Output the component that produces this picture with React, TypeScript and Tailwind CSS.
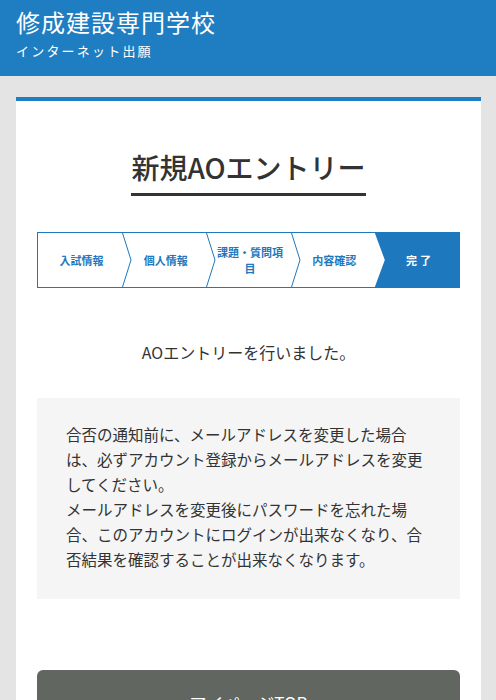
// Entry complete page — ＡＯエントリー完了

const steps = [
  { label: ['入試情報'] },
  { label: ['個人情報'] },
  { label: ['課題・質問項', '目'] },
  { label: ['内容確認'] },
  { label: ['完了'], active: true },
];

const noticeLines = [
  '合否の通知前に、メールアドレスを変更した場合',
  'は、必ずアカウント登録からメールアドレスを変更',
  'してください。',
  'メールアドレスを変更後にパスワードを忘れた場',
  '合、このアカウントにログインが出来なくなり、合',
  '否結果を確認することが出来なくなります。',
];

function Chevron() {
  return (
    <svg
      className="absolute left-0 top-0 h-full w-[10px]"
      viewBox="0 0 10 56"
      preserveAspectRatio="none"
    >
      <polyline
        points="0.5,0 9,28 0.5,56"
        fill="none"
        stroke="#1e78bd"
        strokeWidth="1"
        vectorEffect="non-scaling-stroke"
      />
    </svg>
  );
}

function StepBar() {
  return (
    <div className="flex h-[56px] border border-[#1e78bd]">
      {steps.map((step, i) => (
        <div key={i} className="relative flex-1">
          {step.active ? (
            <div className="absolute inset-0 bg-[#1e78bd] [clip-path:polygon(0_0,100%_0,100%_100%,0_100%,10px_50%)]" />
          ) : (
            i > 0 && <Chevron />
          )}
          <div
            className={`relative flex h-full flex-col items-center justify-center pl-[3px] text-center text-[11px] font-bold leading-[16px] ${
              step.active ? 'text-white tracking-[3px] pl-[6px]' : 'text-[#1e78bd]'
            }`}
          >
            {step.label.map((l) => (
              <span key={l}>{l}</span>
            ))}
          </div>
        </div>
      ))}
    </div>
  );
}

export default function App() {
  return (
    <div className="h-[700px] overflow-hidden bg-[#e4e4e4] font-['Noto_Sans_CJK_JP',sans-serif] text-[#333]">
      {/* Header */}
      <header className="h-[76px] bg-[#1f7dc1] px-4 pt-[6px] text-white">
        <div className="text-[24px] leading-[32px] tracking-[1px]">修成建設専門学校</div>
        <div className="mt-[4px] text-[13px] leading-[18px] tracking-[2.2px]">インターネット出願</div>
      </header>

      {/* Card */}
      <div className="ml-4 mr-[15px] mt-[21px] h-[603px] border-t-4 border-[#1f7dc1] bg-white px-[21px]">
        <div className="flex justify-center pt-[45px]">
          <h1 className="border-b-[3px] border-[#333] pb-[5px] text-[28px] font-medium leading-[42px]">
            新規AOエントリー
          </h1>
        </div>

        <div className="mt-[36px]">
          <StepBar />
        </div>

        <p className="mt-[52px] text-center text-[16px] leading-[24px]">AOエントリーを行いました。</p>

        <div className="mt-[34px] bg-[#f5f5f5] px-[29px] pb-[27px] pt-[24px] text-[15.5px] leading-[25px] text-[#333]">
          {noticeLines.map((l) => (
            <div key={l} className="whitespace-nowrap">
              {l}
            </div>
          ))}
        </div>

        <button className="mt-[71px] flex h-[66px] w-full items-center justify-center rounded-[6px] bg-[#626660] text-[17px] text-white">
          マイページTOP
        </button>
      </div>
    </div>
  );
}
